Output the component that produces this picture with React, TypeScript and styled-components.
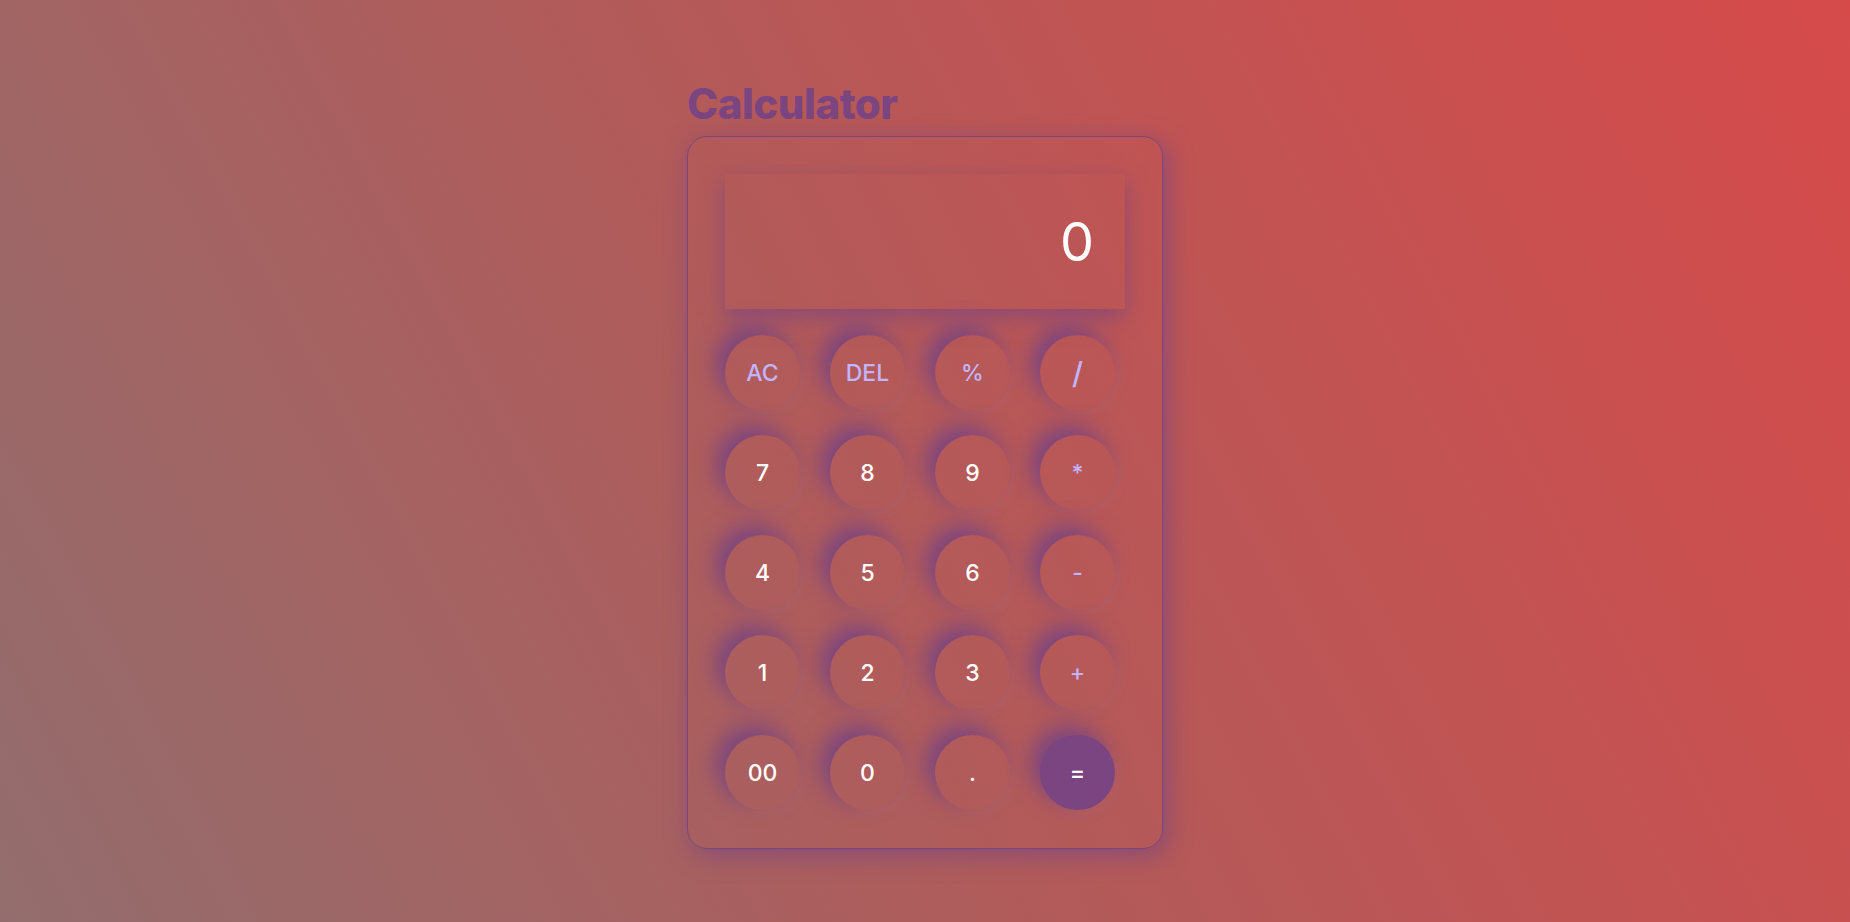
import { useState } from "react"
import styled, { createGlobalStyle } from "styled-components"

const purple = "#7a4580"
const lavender = "#c3b4ff"

const GlobalStyle = createGlobalStyle`
  *{
    box-sizing: border-box;
  }
  html, body{
    margin:0;
    padding:0;
  }
  body{
    min-height:100vh;
    font-family: Inter, "Open Sans", sans-serif;
    background: linear-gradient(62deg, #936d6d 0%, #b15b5a 45%, #d64a4a 100%);
    background-attachment: fixed;
  }
`

const keys = [
  ["AC", "DEL", "%", "/"],
  ["7", "8", "9", "*"],
  ["4", "5", "6", "-"],
  ["1", "2", "3", "+"],
  ["00", "0", ".", "="],
]

const isOp = (k: string) => ["AC", "DEL", "%", "/", "*", "-", "+"].includes(k)

const App = () => {
  const [value, setValue] = useState("0")

  const handleKey = (k: string) => {
    if (k === "AC") return setValue("0")
    if (k === "DEL") return setValue(value.length > 1 ? value.slice(0, -1) : "0")
    if (k === "=") {
      try {
        // eslint-disable-next-line no-new-func
        const res = Function(`return (${value})`)()
        setValue(String(res))
      } catch {
        setValue("0")
      }
      return
    }
    setValue(value === "0" && !isOp(k) && k !== "." ? k : value + k)
  }

  return <>
    <GlobalStyle />
    <Page>
      <Wrapper>
        <Title>Calculator</Title>
        <Card>
          <Display>{value}</Display>
          <Keys>
            {keys.flat().map(k =>
              <Key
                key={k}
                $op={isOp(k)}
                $equal={k === "="}
                $slash={k === "/"}
                onClick={() => handleKey(k)}>
                {k}
              </Key>
            )}
          </Keys>
        </Card>
      </Wrapper>
    </Page>
  </>
}

const Page = styled.div`
  display:flex;
  justify-content:center;
  padding-top:76px;
`

const Wrapper = styled.div`
  display:flex;
  flex-direction:column;
  width:476px;
`

const Title = styled.h1`
  margin:0 0 4px;
  font-size:42px;
  line-height:56px;
  font-weight:800;
  letter-spacing:-0.5px;
  color:${purple};
`

const Card = styled.div`
  display:flex;
  flex-direction:column;
  gap:26px;
  padding:37px 37px 38px;
  border:1px solid ${purple};
  border-radius:20px;
  box-shadow: 4px 6px 24px rgba(122,69,128,0.75);
`

const Display = styled.div`
  height:135px;
  width:400px;
  display:flex;
  align-items:center;
  justify-content:flex-end;
  padding-right:31px;
  color:#fff;
  font-size:54px;
  font-weight:400;
  box-shadow: 0 8px 20px rgba(122,69,128,0.7);
`

const Keys = styled.div`
  display:grid;
  grid-template-columns:repeat(4, 75px);
  column-gap:30px;
  row-gap:25px;
`

const Key = styled.button<{ $op: boolean, $equal: boolean, $slash: boolean }>`
  width:75px;
  height:75px;
  border-radius:50%;
  border:0;
  padding:0;
  cursor:pointer;
  font-family: Inter, "Open Sans", sans-serif;
  font-size:${p => p.$slash ? "30px" : "23px"};
  font-weight:500;
  color:${p => p.$op ? lavender : "#fff"};
  background:${p => p.$equal ? purple : "transparent"};
  box-shadow:
    -9px -9px 22px rgba(122,69,128,1),
    6px 6px 14px rgba(255,255,255,0.03);
`

export default App
